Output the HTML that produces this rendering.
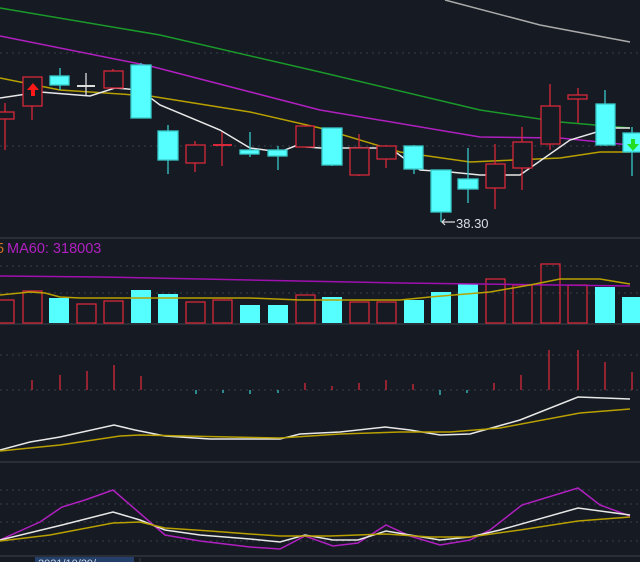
<!DOCTYPE html>
<html><head><meta charset="utf-8"><style>
html,body{margin:0;padding:0;background:#161a22;}
svg{display:block;}
text{font-family:"Liberation Sans",sans-serif;}
</style></head><body>
<svg width="640" height="562" viewBox="0 0 640 562" xmlns="http://www.w3.org/2000/svg">
<rect width="640" height="562" fill="#161a22"/>
<g stroke="#3a3f4a" stroke-width="1" stroke-dasharray="2,4">
<line x1="0" y1="53" x2="640" y2="53"/><line x1="0" y1="146" x2="640" y2="146"/>
<line x1="0" y1="266" x2="640" y2="266"/><line x1="0" y1="293" x2="640" y2="293"/>
<line x1="0" y1="355" x2="640" y2="355"/><line x1="0" y1="390" x2="640" y2="390"/>
<line x1="0" y1="490" x2="640" y2="490"/><line x1="0" y1="504" x2="640" y2="504"/>
<line x1="0" y1="522" x2="640" y2="522"/><line x1="0" y1="541" x2="640" y2="541"/>
</g>
<g stroke="#2a2e37" stroke-width="2">
<line x1="0" y1="238" x2="640" y2="238"/><line x1="0" y1="324" x2="640" y2="324"/>
<line x1="0" y1="462" x2="640" y2="462"/><line x1="0" y1="556" x2="640" y2="556"/>
</g>
<g fill="none" stroke-width="1.5">
<polyline stroke="#aaaaaa" points="445,0 540,25 630,42"/>
<polyline stroke="#1a9a2a" points="0,8 160,35 320,72 480,110 560,122 630,128"/>
<polyline stroke="#b020c0" points="0,36 150,66 320,110 480,137 560,138 630,145"/>
<polyline stroke="#b8a000" points="0,78 60,90 150,96 250,112 320,128 400,152 470,162 560,158 600,152 630,152"/>
<polyline stroke="#e8e8e8" points="0,98 40,92 90,96 115,88 140,90 160,105 220,130 250,148 280,152 295,146 320,148 390,148 420,170 450,172 480,175 520,175 570,140 610,128 630,128"/>
</g>
<g stroke-width="1.3">
<g stroke="#d8283c" fill="#161a22">
<line x1="5" y1="103" x2="5" y2="150"/><rect x="-2" y="112" width="16" height="7"/>
<line x1="32" y1="77" x2="32" y2="120"/><rect x="23" y="77" width="19" height="29"/>
<line x1="113" y1="69" x2="113" y2="88"/><rect x="104" y="71" width="19" height="17"/>
<line x1="195" y1="141" x2="195" y2="172"/><rect x="186" y="145" width="19" height="18"/>
<line x1="222" y1="132" x2="222" y2="166"/><line x1="213" y1="145" x2="232" y2="145" stroke-width="2"/>
<line x1="305" y1="126" x2="305" y2="147"/><rect x="296" y="126" width="18" height="21"/>
<line x1="359" y1="134" x2="359" y2="176"/><rect x="350" y="148" width="19" height="27"/>
<line x1="386" y1="145" x2="386" y2="168"/><rect x="377" y="146" width="19" height="13"/>
<line x1="495" y1="144" x2="495" y2="209"/><rect x="486" y="164" width="19" height="24"/>
<line x1="522" y1="127" x2="522" y2="190"/><rect x="513" y="142" width="19" height="26"/>
<line x1="550" y1="84" x2="550" y2="150"/><rect x="541" y="106" width="19" height="38"/>
<line x1="578" y1="88" x2="578" y2="123"/><rect x="568" y="95" width="19" height="4"/>
</g>
<g stroke="#dddddd"><line x1="86" y1="73" x2="86" y2="95"/><line x1="77" y1="86" x2="95" y2="86" stroke-width="2"/></g>
<g stroke="#38c8c8" fill="#55ffff">
<line x1="60" y1="68" x2="60" y2="90"/><rect x="50" y="76" width="19" height="9"/>
<line x1="141" y1="63" x2="141" y2="118"/><rect x="131" y="65" width="20" height="53"/>
<line x1="168" y1="125" x2="168" y2="174"/><rect x="158" y="131" width="20" height="29"/>
<line x1="250" y1="132" x2="250" y2="157"/><rect x="240" y="150" width="19" height="4"/>
<line x1="278" y1="146" x2="278" y2="170"/><rect x="268" y="150" width="19" height="6"/>
<line x1="332" y1="128" x2="332" y2="166"/><rect x="322" y="128" width="20" height="37"/>
<line x1="414" y1="145" x2="414" y2="174"/><rect x="404" y="146" width="19" height="23"/>
<line x1="441" y1="170" x2="441" y2="222"/><rect x="431" y="170" width="20" height="42"/>
<line x1="468" y1="148" x2="468" y2="203"/><rect x="458" y="179" width="20" height="10"/>
<line x1="605" y1="90" x2="605" y2="146"/><rect x="596" y="104" width="19" height="41"/>
<line x1="632" y1="127" x2="632" y2="176"/><rect x="623" y="133" width="18" height="19"/>
</g>
</g>
<polygon points="33,83 27,90 31,90 31,96 35,96 35,90 39,90" fill="#ff1a1a"/>
<polygon points="633,151 627,144 631,144 631,139 635,139 635,144 639,144" fill="#22dd22"/>
<path d="M455,222 H442 M445,219 L442,222 L445,225" stroke="#dddddd" stroke-width="1.2" fill="none"/>
<text x="456" y="228" font-size="13" fill="#d8dde8">38.30</text>
<text x="-4" y="253" font-size="14.5" fill="#d07020">5</text>
<text x="7" y="253" font-size="14.5" fill="#b020c0">MA60: 318003</text>
<g stroke-width="1.3">
<g stroke="#d8283c" fill="none">
<rect x="-1" y="300" width="15" height="23"/><rect x="23" y="291" width="19" height="32"/>
<rect x="77" y="304" width="19" height="19"/><rect x="104" y="301" width="19" height="22"/>
<rect x="186" y="302" width="19" height="21"/><rect x="213" y="300" width="19" height="23"/>
<rect x="296" y="295" width="19" height="28"/><rect x="350" y="302" width="19" height="21"/>
<rect x="377" y="302" width="19" height="21"/><rect x="486" y="279" width="19" height="44"/>
<rect x="513" y="285" width="19" height="38"/><rect x="541" y="264" width="19" height="59"/>
<rect x="568" y="285" width="19" height="38"/>
</g>
<g fill="#55ffff">
<rect x="49" y="298" width="20" height="25"/><rect x="131" y="290" width="20" height="33"/>
<rect x="158" y="294" width="20" height="29"/><rect x="240" y="305" width="20" height="18"/>
<rect x="268" y="305" width="20" height="18"/><rect x="322" y="297" width="20" height="26"/>
<rect x="404" y="300" width="20" height="23"/><rect x="431" y="292" width="20" height="31"/>
<rect x="458" y="284" width="20" height="39"/><rect x="595" y="287" width="20" height="36"/>
<rect x="622" y="297" width="18" height="26"/>
</g>
</g>
<g fill="none" stroke-width="1.5">
<polyline stroke="#a010b0" points="0,276 100,277 250,280 400,283 630,286"/>
<polyline stroke="#b8a000" points="0,295 30,292 45,293 60,297 80,298 250,298 300,300 400,300 430,297 490,292 530,285 560,279 600,279 630,284"/>
</g>
<g stroke="#d8283c" stroke-width="1.3">
<line x1="32" y1="390" x2="32" y2="380"/><line x1="60" y1="390" x2="60" y2="375"/>
<line x1="87" y1="390" x2="87" y2="371"/><line x1="114" y1="390" x2="114" y2="365"/>
<line x1="141" y1="390" x2="141" y2="376"/><line x1="305" y1="390" x2="305" y2="383"/>
<line x1="332" y1="390" x2="332" y2="386"/><line x1="359" y1="390" x2="359" y2="383"/>
<line x1="386" y1="390" x2="386" y2="380"/><line x1="413" y1="390" x2="413" y2="384"/>
<line x1="494" y1="390" x2="494" y2="383"/><line x1="521" y1="390" x2="521" y2="375"/>
<line x1="549" y1="390" x2="549" y2="350"/><line x1="578" y1="390" x2="578" y2="350"/>
<line x1="605" y1="390" x2="605" y2="362"/><line x1="632" y1="390" x2="632" y2="372"/>
</g>
<g stroke="#38c8c8" stroke-width="1.3">
<line x1="196" y1="390" x2="196" y2="394"/><line x1="223" y1="390" x2="223" y2="393"/>
<line x1="250" y1="390" x2="250" y2="394"/><line x1="278" y1="390" x2="278" y2="393"/>
<line x1="440" y1="390" x2="440" y2="395"/><line x1="467" y1="390" x2="467" y2="393"/>
</g>
<g fill="none" stroke-width="1.5">
<polyline stroke="#e8e8e8" points="0,450 30,442 60,437 114,425 135,430 165,436 210,439 280,439 300,434 340,432 385,427 410,430 440,435 470,434 520,420 578,397 630,399"/>
<polyline stroke="#b8a000" points="0,451 60,445 120,436 140,435 230,437 280,438 340,434 400,432 450,432 500,428 580,413 630,409"/>
</g>
<g fill="none" stroke-width="1.5">
<polyline stroke="#b020c0" points="0,540 40,522 62,507 85,500 113,490 165,535 200,541 250,547 280,549 305,536 333,546 358,543 386,525 410,536 440,545 470,540 490,530 522,505 578,488 600,505 630,516"/>
<polyline stroke="#e8e8e8" points="0,540 62,525 113,512 140,520 165,530 200,535 250,539 280,542 305,535 333,540 358,540 386,531 410,535 440,540 470,537 500,530 578,508 630,515"/>
<polyline stroke="#b8a000" points="0,541 50,535 113,523 140,522 165,528 210,531 250,534 280,536 330,536 386,534 430,537 470,537 520,530 578,521 630,517"/>
</g>
<rect x="35" y="557" width="99" height="6" fill="#24406a"/>
<text x="38" y="567" font-size="11" fill="#c8d4e8">2021/10/29/一</text>
<line x1="140" y1="558" x2="140" y2="562" stroke="#3a3f4a"/>
</svg>
</body></html>
